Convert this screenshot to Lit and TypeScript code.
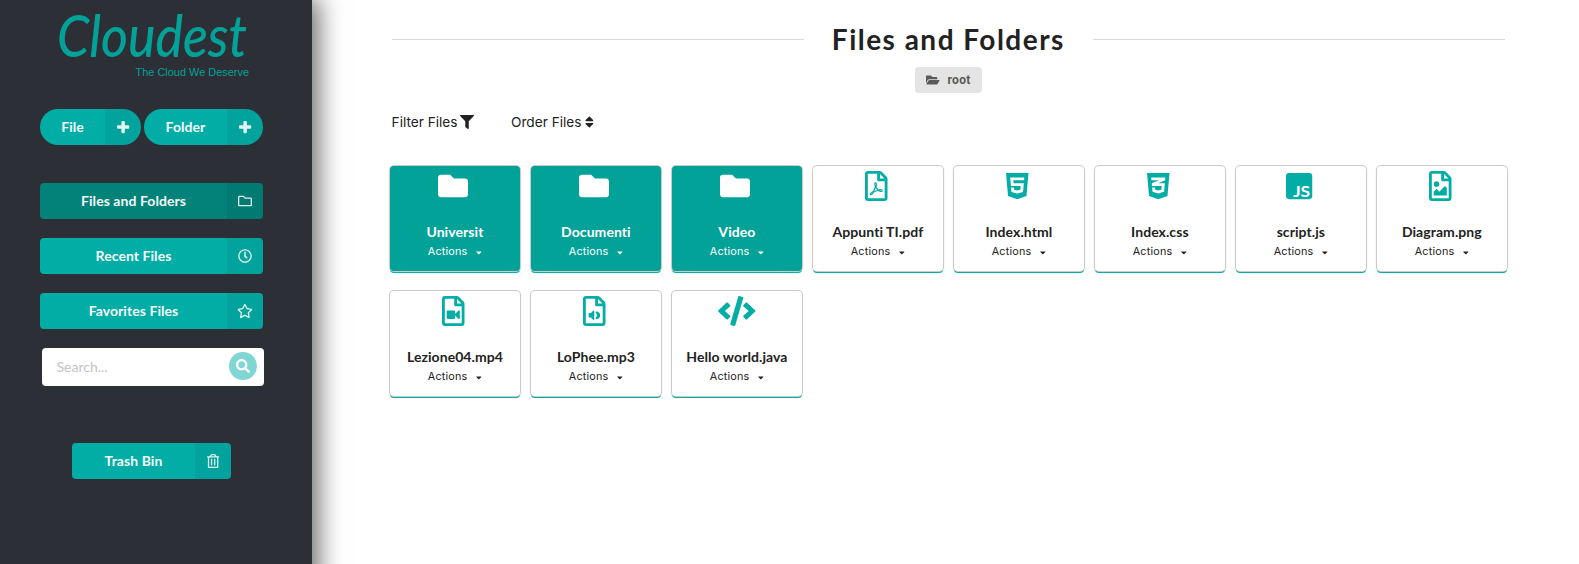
import { LitElement, html, svg, css } from "lit";
import { customElement, property } from "lit/decorators.js";

const PAGE =
  "M369.9 97.9L286 14C277 5 264.8-.1 252.1-.1H48C21.5 0 0 21.5 0 48v416c0 26.5 21.5 48 48 48h288c26.5 0 48-21.5 48-48V131.9c0-12.7-5.1-25-14.1-34zM332.1 128H256V51.9l76.1 76.1zM48 464V48h160v104c0 13.3 10.7 24 24 24h104v288H48z";

const ICONS: Record<string, { w: number; d: string }> = {
  folder: { w: 512, d: "M464 128H272l-64-64H48C21.49 64 0 85.49 0 112v288c0 26.51 21.49 48 48 48h416c26.51 0 48-21.49 48-48V176c0-26.51-21.49-48-48-48z" },
  folderOutline: { w: 512, d: "M464 128H272l-54.63-54.63c-6-6-14.14-9.37-22.63-9.37H48C21.49 64 0 85.49 0 112v288c0 26.51 21.49 48 48 48h416c26.51 0 48-21.49 48-48V176c0-26.51-21.49-48-48-48zm0 272H48V112h140.12l54.63 54.63c6 6 14.14 9.37 22.63 9.37H464v224z" },
  folderOpen: { w: 576, d: "M572.694 292.093L500.27 416.248A63.997 63.997 0 0 1 444.989 448H45.025c-18.523 0-30.064-20.093-20.731-36.093l72.424-124.155A64 64 0 0 1 152 256h399.964c18.523 0 30.064 20.093 20.73 36.093zM152 224h328v-48c0-26.51-21.49-48-48-48H272l-64-64H48C21.49 64 0 85.49 0 112v278.046l69.077-118.418C86.214 242.25 117.989 224 152 224z" },
  clock: { w: 512, d: "M256 8C119 8 8 119 8 256s111 248 248 248 248-111 248-248S393 8 256 8zm0 448c-110.5 0-200-89.5-200-200S145.5 56 256 56s200 89.5 200 200-89.5 200-200 200zm61.8-104.4l-84.9-61.7c-3.1-2.3-4.9-5.9-4.9-9.7V116c0-6.6 5.4-12 12-12h32c6.6 0 12 5.4 12 12v141.7l66.8 48.6c5.4 3.9 6.5 11.4 2.6 16.8L334.6 349c-3.9 5.3-11.4 6.5-16.8 2.6z" },
  star: { w: 576, d: "M528.1 171.5L382 150.2 316.7 17.8c-11.7-23.6-45.6-23.9-57.4 0L194 150.2 47.9 171.5c-26.2 3.8-36.7 36.1-17.7 54.6l105.7 103-25 145.5c-4.5 26.3 23.2 46 46.4 33.7L288 439.6l130.7 68.7c23.2 12.2 50.9-7.4 46.4-33.7l-25-145.5 105.7-103c19-18.5 8.5-50.8-17.7-54.6zM388.6 312.3l23.7 138.4L288 385.4l-124.3 65.3 23.7-138.4-100.6-98 139-20.2 62.2-126 62.2 126 139 20.2-100.6 98z" },
  trash: { w: 448, d: "M268 416h24a12 12 0 0 0 12-12V188a12 12 0 0 0-12-12h-24a12 12 0 0 0-12 12v216a12 12 0 0 0 12 12zM432 80h-82.41l-34-56.7A48 48 0 0 0 274.41 0H173.59a48 48 0 0 0-41.16 23.3L98.41 80H16A16 16 0 0 0 0 96v16a16 16 0 0 0 16 16h16v336a48 48 0 0 0 48 48h288a48 48 0 0 0 48-48V128h16a16 16 0 0 0 16-16V96a16 16 0 0 0-16-16zM171.84 50.91A6 6 0 0 1 177 48h94a6 6 0 0 1 5.15 2.91L293.61 80H154.39zM368 464H80V128h288zm-212-48h24a12 12 0 0 0 12-12V188a12 12 0 0 0-12-12h-24a12 12 0 0 0-12 12v216a12 12 0 0 0 12 12z" },
  search: { w: 512, d: "M505 442.7L405.3 343c-4.5-4.5-10.6-7-17-7H372c27.6-35.3 44-79.7 44-128C416 93.1 322.9 0 208 0S0 93.1 0 208s93.1 208 208 208c48.3 0 92.7-16.4 128-44v16.3c0 6.4 2.5 12.5 7 17l99.7 99.7c9.4 9.4 24.6 9.4 33.9 0l28.3-28.3c9.4-9.4 9.4-24.6.1-34zM208 336c-70.7 0-128-57.2-128-128 0-70.7 57.2-128 128-128 70.7 0 128 57.2 128 128 0 70.7-57.2 128-128 128z" },
  plus: { w: 448, d: "M416 192H288V64c0-17.67-14.33-32-32-32h-64c-17.67 0-32 14.33-32 32v128H32c-17.67 0-32 14.33-32 32v64c0 17.67 14.33 32 32 32h128v128c0 17.67 14.33 32 32 32h64c17.67 0 32-14.33 32-32V320h128c17.67 0 32-14.33 32-32v-64c0-17.67-14.33-32-32-32z" },
  filter: { w: 512, d: "M487.976 0H24.028C2.71 0-8.047 25.866 7.058 40.971L192 225.941V432c0 7.831 3.821 15.17 10.237 19.662l80 55.98C298.02 518.69 320 507.493 320 487.98V225.941l184.947-184.97C520.021 25.896 509.338 0 487.976 0z" },
  sort: { w: 320, d: "M41 288h238c21.4 0 32.1 25.9 17 41L177 448c-9.4 9.4-24.6 9.4-33.9 0L24 329c-15.1-15.1-4.4-41 17-41zm255-105L177 64c-9.4-9.4-24.6-9.4-33.9 0L24 183c-15.1 15.1-4.4 41 17 41h238c21.4 0 32.1-25.9 17-41z" },
  caret: { w: 320, d: "M31.3 192h257.3c17.8 0 26.7 21.5 14.1 34.1L174.1 354.8c-7.8 7.8-20.5 7.8-28.3 0L17.2 226.1C4.6 213.5 13.5 192 31.3 192z" },
  pdf: { w: 384, d: PAGE + "m250.2-143.7c-12.2-12-47-8.7-64.4-6.5-17.2-10.5-28.7-25-36.8-46.3 3.9-16.1 10.1-40.6 5.4-56-4.2-26.2-37.8-23.6-42.6-5.9-4.4 16.1-.4 38.5 7 67.1-10 23.9-24.9 56-35.4 74.4-20 10.3-47 26.2-51 46.2-3.3 15.8 26 55.2 76.1-31.2 22.4-7.4 46.8-16.5 68.4-20.1 18.9 10.2 41 17 55.8 17 25.5 0 28-28.2 17.5-38.7zm-198.1 77.8c5.1-13.7 24.5-29.5 30.4-35-19 30.3-30.4 35.7-30.4 35zm81.6-190.6c7.4 0 6.7 32.1 1.8 40.8-4.4-13.9-4.3-40.8-1.8-40.8zm-24.4 136.6c9.7-16.9 18-37 24.7-54.7 8.3 15.1 18.9 27.2 30.1 35.5-20.8 4.3-38.9 13.1-54.8 19.2zm131.6-5s-5 6-37.3-7.8c35.1-2.6 40.9 5.4 37.3 7.8z" },
  html5: { w: 384, d: "M0 32l34.9 395.8L191.5 480l157.6-52.2L384 32H0zm308.2 127.9H124.4l4.1 49.4h175.6l-13.6 148.4-97.9 27v.3h-1.1l-98.7-27.3-6-75.8h47.7L138 320l53.5 14.5 53.7-14.5 6-62.2H84.3L71.5 112.2h241.1l-4.4 47.7z" },
  css3: { w: 384, d: "M0 32l34.9 395.8L192 480l157.1-52.2L384 32H0zm313.1 80l-4.8 47.3L193 208.6l-.3.1h111.5l-12.8 146.6-98.2 28.7-98.8-29.2-6.4-73.9h48.9l3.2 38.3 52.6 13.3 54.7-15.4 3.7-61.6-166.3-.5v-.1l-.2.1-3.6-46.3L193.1 162l6.5-2.7H76.7L70.9 112h242.2z" },
  js: { w: 448, d: "M400 32H48C21.5 32 0 53.5 0 80v352c0 26.5 21.5 48 48 48h352c26.5 0 48-21.5 48-48V80c0-26.5-21.5-48-48-48z" },
  image: { w: 384, d: PAGE + "m32-48h224V288l-23.5-23.5c-4.7-4.7-12.3-4.7-17 0L176 352l-39.5-39.5c-4.7-4.7-12.3-4.7-17 0L80 352v64zm48-240c-26.5 0-48 21.5-48 48s21.5 48 48 48 48-21.5 48-48-21.5-48-48-48z" },
  video: { w: 384, d: PAGE + "m228.687-211.303L224 305.374V268c0-11.046-8.954-20-20-20H100c-11.046 0-20 8.954-20 20v104c0 11.046 8.954 20 20 20h104c11.046 0 20-8.954 20-20v-37.374l52.687 52.674C286.704 397.318 304 390.28 304 375.986V264.011c0-14.311-17.309-21.319-27.313-11.314z" },
  audio: { w: 384, d: PAGE + "M192 260v136c0 10.700-12.900 16-20.500 8.500L136 369h-28c-6.600 0-12-5.400-12-12v-56c0-6.600 5.400-12 12-12h28l35.500-37.500c7.600-7.500 20.500-2.200 20.500 8.500zM228 264c38 0 66 30 66 66s-28 66-66 66c-14 0-20-18-8-27 24-20 24-58 0-78-12-9-6-27 8-27z" },
  code: { w: 640, d: "M278.9 511.5l-61-17.7c-6.4-1.8-10-8.5-8.2-14.9L346.2 8.7c1.8-6.4 8.5-10 14.9-8.2l61 17.7c6.4 1.8 10 8.5 8.2 14.9L293.8 503.3c-1.9 6.4-8.5 10.1-14.9 8.2zm-114-112.2l43.5-46.4c4.6-4.9 4.3-12.7-.8-17.2L117 256l90.6-79.7c5.1-4.5 5.5-12.3.8-17.2l-43.5-46.4c-4.5-4.8-12.1-5.1-17-.5L3.8 247.2c-5.1 4.7-5.1 12.8 0 17.5l144.1 135.1c4.9 4.6 12.5 4.4 17-.5zm327.2.6l144.1-135.1c5.1-4.7 5.1-12.8 0-17.5L492.1 112.1c-4.8-4.5-12.4-4.3-17 .5L431.6 159c-4.6 4.9-4.3 12.7.8 17.2L523 256l-90.6 79.7c-5.1 4.500-5.500 12.300-.8 17.200l43.500 46.400c4.500 4.900 12.100 5.100 17 .6z" },
};

@customElement("ui-icon")
class UiIcon extends LitElement {
  @property() name = "folder";
  static styles = css`
    :host { display: inline-flex; height: 1em; flex: none; }
    svg { display: block; height: 1em; width: auto; fill: currentColor; overflow: visible; }
    .mark { font: 700 262px Lato, sans-serif; fill: #fff; }
  `;
  render() {
    const icon = ICONS[this.name];
    return html`<svg viewBox="0 0 ${icon.w} 512" style="width:${icon.w / 512}em">
      <path d=${icon.d}></path>
      ${this.name === "js"
        ? svg`<text class="mark" x="122" y="436" textLength="290" lengthAdjust="spacingAndGlyphs">JS</text>`
        : null}
    </svg>`;
  }
}

@customElement("side-button")
class SideButton extends LitElement {
  @property() label = "";
  @property() icon = "plus";
  static styles = css`
    :host { display: flex; height: 36px; border-radius: 4px; overflow: hidden; background: #02ada6; color: #fff; font: 700 14px/35px Lato, sans-serif; letter-spacing: .06px; }
    :host([round]) { border-radius: 18px; }
    :host([active]) { background: #028279; }
    .label { flex: 1; text-align: center; opacity: .96; white-space: nowrap; }
    .icon { width: 36px; display: flex; align-items: center; justify-content: center; background: rgba(0, 0, 0, .055); color: rgba(255, 255, 255, .87); }
  `;
  render() {
    return html`<div class="label">${this.label}</div><div class="icon"><ui-icon name=${this.icon}></ui-icon></div>`;
  }
}

@customElement("file-card")
class FileCard extends LitElement {
  @property() label = "";
  @property() icon = "";
  static styles = css`
    :host { display: flex; flex-direction: column; align-items: center; height: 105px; box-sizing: border-box; padding-top: 5px; border-radius: 4px; background: #fff; color: #222; box-shadow: 0 0 0 1px #cbcbcc, 0 2px 0 0 #02ada6, 0 1px 3px 0 #d4d4d5; }
    :host([folder]) { background: #02a298; color: #fff; }
    .icon { font-size: 30px; color: #02ada6; margin-right: 4px; }
    .icon[name="code"] { margin-right: 0; }
    :host([folder]) .icon { color: #fff; }
    .name { margin-top: 21px; font: 700 14px/20px Lato, sans-serif; letter-spacing: .07px; font-variant-ligatures: none; white-space: nowrap; }
    .actions { display: flex; align-items: center; gap: 9px; margin-top: 1px; font: 400 10.8px/18px Inter, sans-serif; letter-spacing: .2px; }
    .actions ui-icon { font-size: 9px; }
  `;
  render() {
    return html`<ui-icon class="icon" name=${this.icon}></ui-icon>
      <div class="name">${this.label}</div>
      <div class="actions"><span>Actions</span><ui-icon name="caret"></ui-icon></div>`;
  }
}

const FILES = [
  { label: "Universit", icon: "folder" },
  { label: "Documenti", icon: "folder" },
  { label: "Video", icon: "folder" },
  { label: "Appunti TI.pdf", icon: "pdf" },
  { label: "Index.html", icon: "html5" },
  { label: "Index.css", icon: "css3" },
  { label: "script.js", icon: "js" },
  { label: "Diagram.png", icon: "image" },
  { label: "Lezione04.mp4", icon: "video" },
  { label: "LoPhee.mp3", icon: "audio" },
  { label: "Hello world.java", icon: "code" },
];

@customElement("app-root")
class AppRoot extends LitElement {
  static styles = css`
    :host { display: flex; align-items: flex-start; height: 564px; overflow: hidden; background: #fff; color: #222; font-family: Lato, sans-serif; }
    .sidebar { width: 312px; height: 620px; flex: none; box-sizing: border-box; padding: 9px 49px 0 40px; background: #2d2f37; box-shadow: 4px 0 24px 2px rgba(0, 0, 0, .6); }
    .logo { display: block; width: 223px; height: 70px; fill: #02a298; overflow: visible; }
    .word { font: italic 500 58px Lato, sans-serif; }
    .tag { font: 400 11px "Liberation Sans", Arial, sans-serif; }
    .pair { display: flex; gap: 3px; margin-top: 30px; }
    .file { width: 101px; }
    .folder { width: 119px; }
    .nav { display: flex; flex-direction: column; gap: 19px; margin-top: 38px; }
    .search { display: flex; align-items: center; justify-content: space-between; box-sizing: border-box; width: 222px; height: 38px; margin: 19px 0 0 2px; padding: 0 7px 2px 14.500px; border-radius: 4px; background: #fff; color: #c3c3c3; font-size: 14px; }
    .round { display: flex; align-items: center; justify-content: center; width: 28px; height: 28px; border-radius: 50%; background: #80d6d2; color: #fff; font-size: 14px; }
    .trash { width: 159px; margin: 57px 0 0 32px; }
    .main { flex: 1; padding: 0 73px 0 78px; }
    .heading { display: flex; align-items: center; margin: 20px 2px 0 2px; font-size: 28px; line-height: 38px; font-weight: 700; letter-spacing: 1.48px; white-space: nowrap; }
    .heading::before, .heading::after { content: ""; flex: 1; height: 1px; background: #d8d9d9; }
    .heading span { padding: 0 28px; }
    .crumb { display: flex; align-items: center; justify-content: center; gap: 8px; box-sizing: border-box; width: 67px; height: 26px; margin: 9px auto 0; border-radius: 4px; background: #e4e4e4; color: #5a5a5a; font: 700 12px/26px Roboto, sans-serif; letter-spacing: .35px; }
    .tools { display: flex; gap: 37.5px; margin: 19px 0 0 1.6px; font: 400 13.65px/20px Inter, sans-serif; }
    .tool { display: flex; align-items: center; gap: 2px; }
    .tool ui-icon { font-size: 14px; }
    .tool.order { gap: 4px; }
    .grid { display: grid; grid-template-columns: repeat(8, 129.7px); column-gap: 11.3px; row-gap: 20px; margin-top: 34px; padding-left: .1px; }
  `;
  render() {
    return html`
      <aside class="sidebar">
        <svg class="logo" viewBox="0 0 223 70">
          <text class="word" x="17" y="48" textLength="190" lengthAdjust="spacingAndGlyphs">Cloudest</text>
          <text class="tag" x="95.500" y="67" textLength="113.500" lengthAdjust="spacingAndGlyphs">The Cloud We Deserve</text>
        </svg>
        <div class="pair">
          <side-button class="file" round label="File" icon="plus"></side-button>
          <side-button class="folder" round label="Folder" icon="plus"></side-button>
        </div>
        <nav class="nav">
          <side-button active label="Files and Folders" icon="folderOutline"></side-button>
          <side-button label="Recent Files" icon="clock"></side-button>
          <side-button label="Favorites Files" icon="star"></side-button>
        </nav>
        <div class="search"><span>Search...</span><span class="round"><ui-icon name="search"></ui-icon></span></div>
        <side-button class="trash" label="Trash Bin" icon="trash"></side-button>
      </aside>
      <main class="main">
        <div class="heading"><span>Files and Folders</span></div>
        <div class="crumb"><ui-icon name="folderOpen"></ui-icon>root</div>
        <div class="tools">
          <div class="tool"><span>Filter Files</span><ui-icon name="filter"></ui-icon></div>
          <div class="tool order"><span>Order Files</span><ui-icon name="sort"></ui-icon></div>
        </div>
        <div class="grid">
          ${FILES.map((f) => html`<file-card ?folder=${f.icon === "folder"} label=${f.label} icon=${f.icon}></file-card>`)}
        </div>
      </main>
    `;
  }
}
